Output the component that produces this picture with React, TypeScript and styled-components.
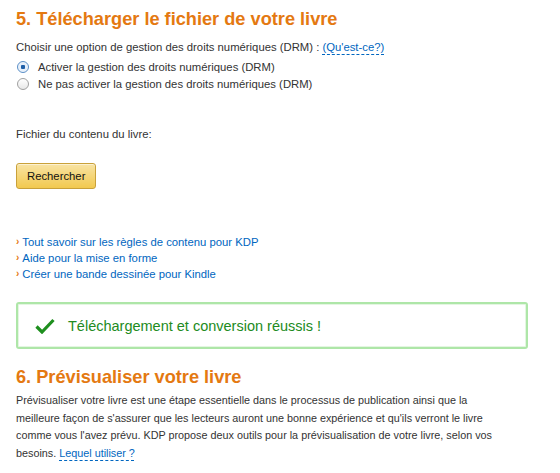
import React from 'react'
import styled, { createGlobalStyle } from 'styled-components'

const GlobalStyle = createGlobalStyle`
  body {
    margin: 0;
    background: #ffffff;
    font-family: Arial, "Liberation Sans", sans-serif;
    color: #333333;
  }
`

const Page = styled.div`
  width: 492px;
  padding: 8px 0 0 16px;
  font-size: 11.3px;
`

const Heading = styled.h2<{ gapTop?: number }>`
  margin: ${({ gapTop }) => gapTop ?? 0}px 0 0;
  font-size: 18.2px;
  font-weight: bold;
  line-height: 22px;
  color: #e47911;
`

const Prompt = styled.div`
  margin-top: 9px;
  line-height: 16px;
`

const DottedLink = styled.a`
  color: #0066c0;
  text-decoration: underline dashed #0066c0;
  text-underline-offset: 3px;
`

const RadioList = styled.div`
  display: flex;
  flex-direction: column;
  gap: 1px;
  margin-top: 4px;
`

const RadioRow = styled.label`
  display: flex;
  align-items: center;
  gap: 9px;
  height: 16px;
  padding-left: 1px;
`

const RadioDot = styled.span<{ checked?: boolean }>`
  box-sizing: border-box;
  width: 12px;
  height: 12px;
  border-radius: 50%;
  border: 1px solid ${({ checked }) => (checked ? '#5b8fc7' : '#a0a0a0')};
  background: ${({ checked }) =>
    checked
      ? 'radial-gradient(circle, #1f5fa8 0 2px, #e4eefa 2.5px, #f4f8fd 100%)'
      : 'linear-gradient(#ffffff, #e8e8e8)'};
`

const FileLabel = styled.div`
  margin-top: 34px;
  line-height: 16px;
`

const SearchButton = styled.button`
  display: block;
  margin-top: 21px;
  height: 26px;
  padding: 0 10px;
  font-family: Arial, "Liberation Sans", sans-serif;
  font-size: 11.3px;
  color: #111111;
  border: 1px solid #c9a13a;
  border-radius: 3px;
  background: linear-gradient(#f8e3a3, #f2c94f);
  box-shadow: inset 0 1px 0 #fcf1d0;
`

const Links = styled.ul`
  list-style: none;
  margin: 45px 0 0;
  padding: 0;
`

const LinkItem = styled.li`
  line-height: 16px;
  display: flex;
  gap: 3px;
`

const Chevron = styled.span`
  color: #e47911;
  font-weight: bold;
  font-size: 10px;
`

const BlueLink = styled.a`
  color: #0066c0;
  text-decoration: none;
`

const SuccessBox = styled.div`
  box-sizing: border-box;
  display: flex;
  align-items: center;
  gap: 13px;
  margin-top: 20px;
  width: 512px;
  height: 47px;
  padding-left: 17px;
  border: 2px solid #aee6a8;
  border-radius: 3px;
  box-shadow: inset 0 0 0 1px #e4f6e2;
`

const SuccessText = styled.span`
  font-size: 14.5px;
  color: #228b22;
`

const Paragraph = styled.p`
  margin: 4px 0 0;
  font-size: 10.8px;
  line-height: 17.5px;
`

export default function App() {
  return (
    <>
      <GlobalStyle />
      <Page>
        <Heading>5. Télécharger le fichier de votre livre</Heading>
        <Prompt>
          Choisir une option de gestion des droits numériques (DRM) :{' '}
          <DottedLink>(Qu'est-ce?)</DottedLink>
        </Prompt>
        <RadioList>
          <RadioRow>
            <RadioDot checked />
            Activer la gestion des droits numériques (DRM)
          </RadioRow>
          <RadioRow>
            <RadioDot />
            Ne pas activer la gestion des droits numériques (DRM)
          </RadioRow>
        </RadioList>
        <FileLabel>Fichier du contenu du livre:</FileLabel>
        <SearchButton>Rechercher</SearchButton>
        <Links>
          <LinkItem>
            <Chevron>›</Chevron>
            <BlueLink>Tout savoir sur les règles de contenu pour KDP</BlueLink>
          </LinkItem>
          <LinkItem>
            <Chevron>›</Chevron>
            <BlueLink>Aide pour la mise en forme</BlueLink>
          </LinkItem>
          <LinkItem>
            <Chevron>›</Chevron>
            <BlueLink>Créer une bande dessinée pour Kindle</BlueLink>
          </LinkItem>
        </Links>
        <SuccessBox>
          <svg width="20" height="16" viewBox="0 0 20 16">
            <path d="M1.5 8.5 L7 14 L18.5 2" fill="none" stroke="#1e8f1e" strokeWidth="3.2" />
          </svg>
          <SuccessText>Téléchargement et conversion réussis !</SuccessText>
        </SuccessBox>
        <Heading gapTop={17}>6. Prévisualiser votre livre</Heading>
        <Paragraph>
          Prévisualiser votre livre est une étape essentielle dans le processus de publication ainsi que la
          meilleure façon de s'assurer que les lecteurs auront une bonne expérience et qu'ils verront le livre
          comme vous l'avez prévu. KDP propose deux outils pour la prévisualisation de votre livre, selon vos
          besoins. <DottedLink>Lequel utiliser ?</DottedLink>
        </Paragraph>
      </Page>
    </>
  )
}
